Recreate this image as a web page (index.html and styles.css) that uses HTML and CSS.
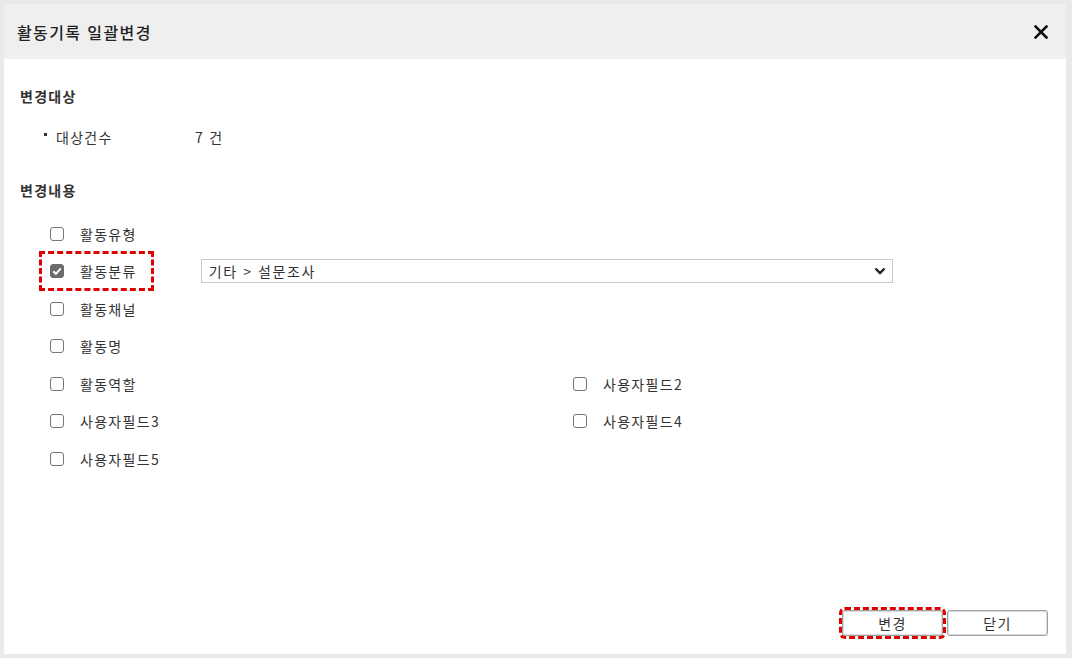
FILE: index.html
```html
<!DOCTYPE html>
<html lang="ko">
<head>
<meta charset="utf-8">
<link rel="stylesheet" href="styles.css">
</head>
<body>
<div class="dialog">
  <div class="header">
    <span class="title">활동기록 일괄변경</span>
    <svg class="close" width="14" height="14" viewBox="0 0 14 14"><path d="M1.5 1.5 L12.5 12.5 M12.5 1.5 L1.5 12.5" stroke="#111" stroke-width="2.6" stroke-linecap="square"/></svg>
  </div>
  <div class="body">
    <div class="section-title">변경대상</div>
    <div class="count-row">
      <span class="bullet"></span>
      <span class="count-label">대상건수</span>
      <span class="count-value">7 건</span>
    </div>
    <div class="section-title second">변경내용</div>
    <div class="grid">
      <div class="row"><label class="item"><span class="cb"></span><span>활동유형</span></label></div>
      <div class="row">
        <label class="item marked"><span class="cb checked"><svg width="12" height="12" viewBox="0 0 12 12"><path d="M2.3 6.2 L4.9 8.8 L9.8 3.4" fill="none" stroke="#fff" stroke-width="2"/></svg></span><span>활동분류</span></label>
        <div class="select"><span>기타 &gt; 설문조사</span><svg width="12" height="8" viewBox="0 0 12 8"><path d="M1.5 1.5 L6 6 L10.5 1.5" fill="none" stroke="#222" stroke-width="2.4"/></svg></div>
      </div>
      <div class="row"><label class="item"><span class="cb"></span><span>활동채널</span></label></div>
      <div class="row"><label class="item"><span class="cb"></span><span>활동명</span></label></div>
      <div class="row two">
        <label class="item"><span class="cb"></span><span>활동역할</span></label>
        <label class="item"><span class="cb"></span><span>사용자필드2</span></label>
      </div>
      <div class="row two">
        <label class="item"><span class="cb"></span><span>사용자필드3</span></label>
        <label class="item"><span class="cb"></span><span>사용자필드4</span></label>
      </div>
      <div class="row"><label class="item"><span class="cb"></span><span>사용자필드5</span></label></div>
    </div>
  </div>
  <div class="footer">
    <button class="btn marked-btn">변경</button>
    <button class="btn">닫기</button>
  </div>
</div>
</body>
</html>
```

FILE: styles.css
```css
* { box-sizing: border-box; }
html, body { margin: 0; padding: 0; }
body {
  background: #e9e9e9;
  width: 1072px;
  height: 658px;
  padding: 4px 6px 4px 4px;
  font-family: "Noto Sans CJK KR", "Noto Sans", sans-serif;
  color: #333;
  font-size: 14px;
  letter-spacing: 1.3px;
}
.dialog {
  background: #fff;
  width: 1062px;
  height: 650px;
  display: flex;
  flex-direction: column;
}
.header {
  background: #efefef;
  height: 55px;
  display: flex;
  align-items: center;
  justify-content: space-between;
  padding: 0 18px 0 13px;
}
.title {
  font-size: 16px;
  font-weight: 500;
  color: #222;
  letter-spacing: 1.4px;
}
.body {
  flex: 1;
  padding: 27px 0 0 16px;
}
.section-title {
  font-size: 14px;
  font-weight: 700;
  color: #333;
  line-height: 20px;
}
.section-title.second { margin-top: 33px; }
.count-row {
  display: flex;
  align-items: center;
  margin-top: 21px;
  padding-left: 24px;
  line-height: 20px;
}
.bullet {
  width: 3px; height: 3px; background: #333;
  margin-right: 9px; margin-top: -6px;
}
.count-label { width: 139px; }
.grid {
  margin-top: 15px;
  padding-left: 30px;
  display: flex;
  flex-direction: column;
}
.row {
  height: 37.5px;
  display: flex;
  align-items: center;
}
.item {
  display: flex;
  align-items: center;
  gap: 16px;
  flex-shrink: 0;
}
.two .item:first-child { width: 523px; }
.cb {
  width: 14px; height: 14px;
  border: 1px solid #767676;
  border-radius: 3px;
  background: #fff;
  display: flex; align-items: center; justify-content: center;
}
.cb.checked { background: #6b6b6b; border-color: #6b6b6b; }
.marked {
  outline: 3px dashed #e00000;
  padding: 7px 14px 7px 8px;
  margin-left: -8px;
}
.select {
  margin-left: 50px;
  width: 692px;
  height: 24px;
  border: 1px solid #c8c8c8;
  display: flex;
  align-items: center;
  justify-content: space-between;
  padding: 0 6px 0 7px;
  color: #333;
  letter-spacing: 1.6px;
}
.footer {
  display: flex;
  justify-content: flex-end;
  gap: 4px;
  padding: 0 18px 18px 0;
}
.btn {
  width: 101px;
  height: 26px;
  background: #fff;
  border: 1px solid #a0a0a0;
  border-radius: 3px;
  font-family: inherit;
  font-size: 14px;
  letter-spacing: 1.3px;
  color: #333;
  padding: 0;
  box-shadow: 0 0 0 1px #ddd inset;
}
.marked-btn { outline: 3px dashed #e00000; }
```
